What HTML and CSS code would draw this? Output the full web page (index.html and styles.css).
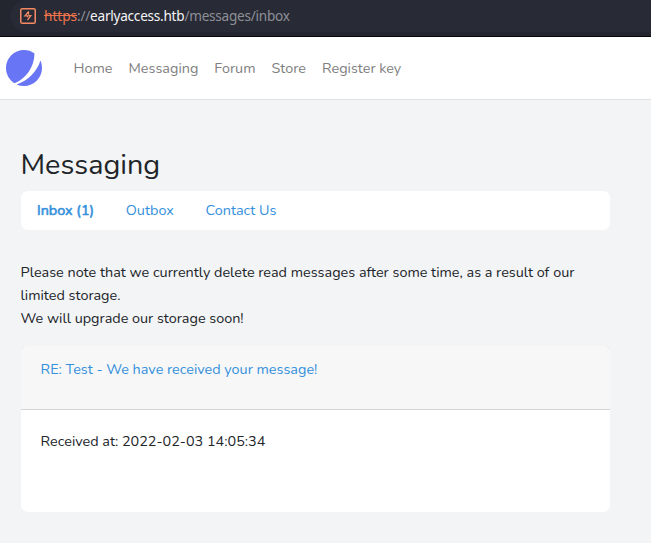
FILE: index.html
```html
<!DOCTYPE html>
<html lang="en">
<head>
<meta charset="utf-8">
<title>Messaging</title>
<link rel="stylesheet" href="styles.css">
</head>
<body>
<div class="browser-bar">
  <div class="address">
    <svg class="burp" width="16" height="16" viewBox="0 0 16 16" fill="none" stroke="#f58a62">
      <rect x=".75" y=".75" width="14.5" height="14.5" rx="1.6" stroke-width="1.5"/>
      <path d="M8.7 3.4 5 7.8H7.6V9.2M8.5 3.6V6.8M8.5 7.6H10.8L7.5 12.2" stroke-width="1.3"/>
    </svg>
    <span class="url"><span class="scheme">https</span>://<span class="host">earlyaccess.htb</span>/messages/inbox</span>
  </div>
</div>
<nav class="navbar">
  <svg class="logo" width="36" height="36" viewBox="0 0 48 48" fill="#6875f5">
    <path d="M11.395 44.428C4.557 40.198 0 32.632 0 24 0 10.745 10.745 0 24 0a23.891 23.891 0 0113.997 4.502c-.2 17.907-11.097 33.245-26.602 39.926z"/>
    <path d="M14.134 45.885A23.914 23.914 0 0024 48c13.255 0 24-10.745 24-24 0-3.516-.756-6.856-2.115-9.866-4.659 15.143-16.608 27.092-31.75 31.751z"/>
  </svg>
  <a>Home</a>
  <a>Messaging</a>
  <a>Forum</a>
  <a>Store</a>
  <a>Register key</a>
</nav>
<main>
  <h1>Messaging</h1>
  <div class="tabs">
    <a class="active">Inbox (1)</a>
    <a>Outbox</a>
    <a>Contact Us</a>
  </div>
  <p class="note">Please note that we currently delete read messages after some time, as a result of our<br>limited storage.<br>We will upgrade our storage soon!</p>
  <div class="message">
    <div class="card">
      <div class="card-header"><a>RE: Test - We have received your message!</a></div>
      <div class="card-body">Received at: 2022-02-03 14:05:34</div>
    </div>
  </div>
</main>
</body>
</html>
```
FILE: styles.css
```css
* { box-sizing: border-box; }
body {
  margin: 0;
  height: 543px;
  overflow: hidden;
  background: #f3f4f6;
  color: #212529;
  font: 14.4px/23px Nunito, Lato, sans-serif;
}
.browser-bar {
  height: 37px;
  padding: 0 0 4px 10px;
  background: #23252f;
  border-bottom: 1px solid #08080c;
}
.address {
  display: flex;
  align-items: center;
  height: 32px;
  padding-left: 10px;
  border-radius: 16px 0 0 16px;
  background: #282a35;
}
.url {
  margin-left: 8px;
  font: 13.6px/20px "Noto Sans", sans-serif;
  letter-spacing: -0.25px;
  color: #8e9097;
  white-space: nowrap;
}
.scheme { color: #ee744c; letter-spacing: 0; text-decoration: line-through; }
.host { color: #f4f4f6; }
.navbar {
  display: flex;
  align-items: center;
  height: 63px;
  padding-left: 6px;
  background: #fff;
  border-bottom: 1px solid #dee2e6;
  color: #808080;
}
.logo { margin-right: 31.6px; }
.navbar a { margin-right: 16px; white-space: nowrap; }
main { width: 610px; padding: 47px 0 0 21px; }
h1 {
  margin: 0 0 0 -0.5px;
  height: 44px;
  font-size: 28.8px;
  line-height: 35px;
  font-weight: 400;
}
.tabs {
  display: flex;
  align-items: center;
  height: 39px;
  padding-left: 16px;
  border-radius: 7px;
  background: #fff;
  color: #3490dc;
}
.tabs a { margin-right: 31.7px; white-space: nowrap; }
.tabs .active { -webkit-text-stroke: 0.6px #3490dc; }
.note { margin: 31px 0 16px -0.4px; white-space: nowrap; }
.message { border-radius: 4px; background: linear-gradient(#ededee 10px, transparent 10px); }
.card { height: 166px; border-radius: 7px; overflow: hidden; background: #fff; }
.card-header {
  height: 64px;
  padding: 12px 19.6px;
  background: #f7f7f7;
  border-bottom: 1px solid #d6d6d6;
  color: #3490dc;
}
.card-body { padding: 20px 19.6px; }
```
